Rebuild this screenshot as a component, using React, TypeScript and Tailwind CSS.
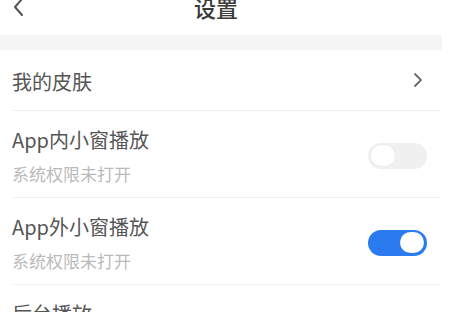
import React from "react";

function Toggle({ on }: { on: boolean }) {
  return (
    <div
      className={
        on
          ? "w-[59px] h-[26px] rounded-full bg-[#2b7bf0] flex items-center justify-end px-[3px]"
          : "w-[59px] h-[26px] rounded-full bg-[#f0f0f0] flex items-center justify-start px-[3px]"
      }
    >
      <div className="w-[24px] h-[21px] rounded-full bg-white shadow-[0_0_2px_rgba(0,0,0,0.05)]" />
    </div>
  );
}

function SwitchRow({ title, sub, on }: { title: string; sub: string; on: boolean }) {
  return (
    <div className="ml-[12px] mr-[11px] h-[87px] border-b border-[#f2f2f2] flex items-center justify-between pr-[13px]">
      <div className="flex flex-col pt-[4px]">
        <span className="text-[20px] leading-[24px] text-[#555]">{title}</span>
        <span className="mt-[11px] text-[17px] leading-[22px] text-[#bababa]">{sub}</span>
      </div>
      <div className="pt-[3px]">
        <Toggle on={on} />
      </div>
    </div>
  );
}

export default function App() {
  return (
    <div className="w-[451px] h-[312px] overflow-hidden bg-white font-['Noto_Sans_CJK_SC','Noto_Sans',sans-serif]">
      {/* header */}
      <div className="h-[35px] flex items-start">
        <div className="w-[36px] pl-[12px] -mt-[2px]">
          <svg width="14" height="18" viewBox="0 0 14 18" fill="none">
            <path d="M10 1 L3 9 L10 17" stroke="#555" strokeWidth="2" strokeLinecap="round" strokeLinejoin="round" />
          </svg>
        </div>
        <div className="flex-1 text-center -mt-[6px] text-[22px] leading-[26px] text-[#3a3a3a] font-medium">设置</div>
        <div className="w-[55px]" />
      </div>

      <div className="w-[442px] h-[15px] bg-[#f5f5f5]" />

      {/* 我的皮肤 */}
      <div className="ml-[12px] mr-[11px] h-[61px] border-b border-[#eeeeee] flex items-center justify-between pr-[17px]">
        <span className="pt-[4px] text-[20px] leading-[24px] text-[#555]">我的皮肤</span>
        <svg width="10" height="16" viewBox="0 0 10 16" fill="none">
          <path d="M2 2 L8 8 L2 14" stroke="#6a6a6a" strokeWidth="1.8" strokeLinecap="round" strokeLinejoin="round" />
        </svg>
      </div>

      <SwitchRow title="App内小窗播放" sub="系统权限未打开" on={false} />
      <SwitchRow title="App外小窗播放" sub="系统权限未打开" on={true} />

      <div className="ml-[12px] pt-[17px]">
        <span className="text-[20px] leading-[24px] text-[#555]">后台播放</span>
      </div>
    </div>
  );
}
